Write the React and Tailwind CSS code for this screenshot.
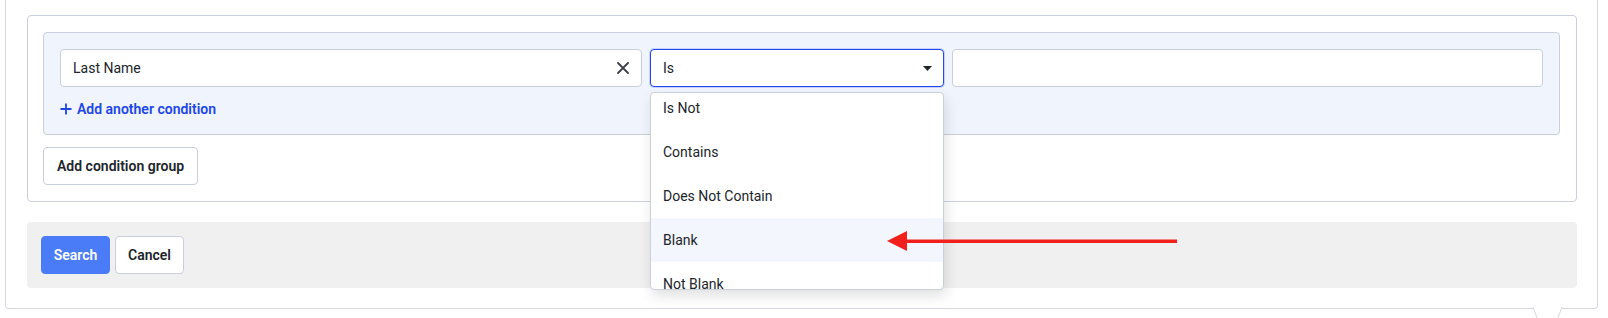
import { useState } from 'react';

const options = ['Is Not', 'Contains', 'Does Not Contain', 'Blank', 'Not Blank'];

export default function App() {
  const [field, setField] = useState('Last Name');
  const [value, setValue] = useState('');

  return (
    <div className="relative w-[1608px] h-[318px] overflow-hidden bg-white font-['Roboto','Liberation_Sans',sans-serif] text-[#21252b]">
      <div className="relative ml-[5px] w-[1593px] border border-t-0 border-[#d6d8de] rounded-b-[4px] pl-[21px] pr-[20px] pt-[15px] pb-5">
        {/* condition card */}
        <div className="border border-[#cbd0dc] rounded-[4px] pl-[15px] pr-4 pt-4 pb-4">
          <div className="border border-[#c9cfdc] rounded-[4px] bg-[#eff4fd] px-4 pt-4 pb-[15px]">
            <div className="flex gap-2">
              <div className="relative w-[582px] h-[38px] flex items-center bg-white border border-[#c9cfdc] rounded-[4px] pl-3 pr-3">
                <input
                  className="flex-1 bg-transparent text-[14px] outline-none"
                  value={field}
                  onChange={(e) => setField(e.target.value)}
                />
                <svg width="12" height="12" viewBox="0 0 12 12" className="shrink-0">
                  <path d="M1 1L11 11M11 1L1 11" stroke="#3c4048" strokeWidth="1.8" strokeLinecap="round" />
                </svg>
              </div>
              <div className="relative z-10 w-[294px]">
                <div className="h-[38px] flex items-center justify-between bg-white border border-[#2448ee] rounded-[4px] pl-3 pr-[11px] shadow-[0_0_0_1px_rgba(36,72,238,0.2)]">
                  <span className="text-[14px]">Is</span>
                  <svg width="9" height="5" viewBox="0 0 9 5">
                    <path d="M0 0H9L4.5 5Z" fill="#21252b" />
                  </svg>
                </div>
                <div className="absolute left-0 top-[43px] w-full h-[198px] overflow-hidden bg-white border border-[#c9cfdc] rounded-[4px] shadow-[2px_6px_14px_rgba(0,0,0,0.12)]">
                  <div className="mt-[-7px]">
                    {options.map((o) => (
                      <div
                        key={o}
                        className={
                          'h-[44px] flex items-center px-3 text-[14px] ' +
                          (o === 'Blank' ? 'bg-[#f3f6fd]' : '')
                        }
                      >
                        {o}
                      </div>
                    ))}
                  </div>
                </div>
              </div>
              <input
                className="flex-1 h-[38px] bg-white border border-[#c9cfdc] rounded-[4px] px-3 text-[14px] outline-none"
                value={value}
                onChange={(e) => setValue(e.target.value)}
              />
            </div>
            <button className="mt-3 h-5 flex items-center gap-[5px] text-[14px] font-semibold text-[#2146e6]">
              <svg width="12" height="12" viewBox="0 0 12 12">
                <path d="M6 0.5V11.5M0.5 6H11.5" stroke="#2146e6" strokeWidth="1.8" />
              </svg>
              Add another condition
            </button>
          </div>
          <button className="mt-3 h-[38px] px-[13px] bg-white border border-[#c9cfdc] rounded-[4px] text-[14px] font-semibold">
            Add condition group
          </button>
        </div>

        {/* footer */}
        <div className="mt-5 h-[66px] bg-[#f0f0f0] rounded-[4px] pl-[14px] pt-[14px] flex gap-[5px]">
          <button className="w-[69px] h-[38px] bg-[#4a7cf7] border border-[#4a7cf7] rounded-[4px] text-white text-[14px] font-semibold">
            Search
          </button>
          <button className="w-[69px] h-[38px] bg-white border border-[#c9cfdc] rounded-[4px] text-[14px] font-semibold">
            Cancel
          </button>
        </div>

        {/* popover tail */}
        <svg className="absolute left-[1526px] top-full mt-[-1px]" width="31" height="12" viewBox="0 0 31 12">
          <path d="M1 0L5.5 12H25.5L30 0Z" fill="white" />
          <path d="M1 0L5.5 12M30 0L25.5 12" stroke="#d6d8de" strokeWidth="1" />
        </svg>
      </div>

      {/* annotation arrow */}
      <svg className="absolute left-[885px] top-[228px] z-20" width="295" height="26" viewBox="0 0 295 26">
        <rect x="20" y="11.5" width="272" height="3.5" fill="#f2201d" />
        <path d="M2 13L22 3V23Z" fill="#f2201d" />
      </svg>
    </div>
  );
}
